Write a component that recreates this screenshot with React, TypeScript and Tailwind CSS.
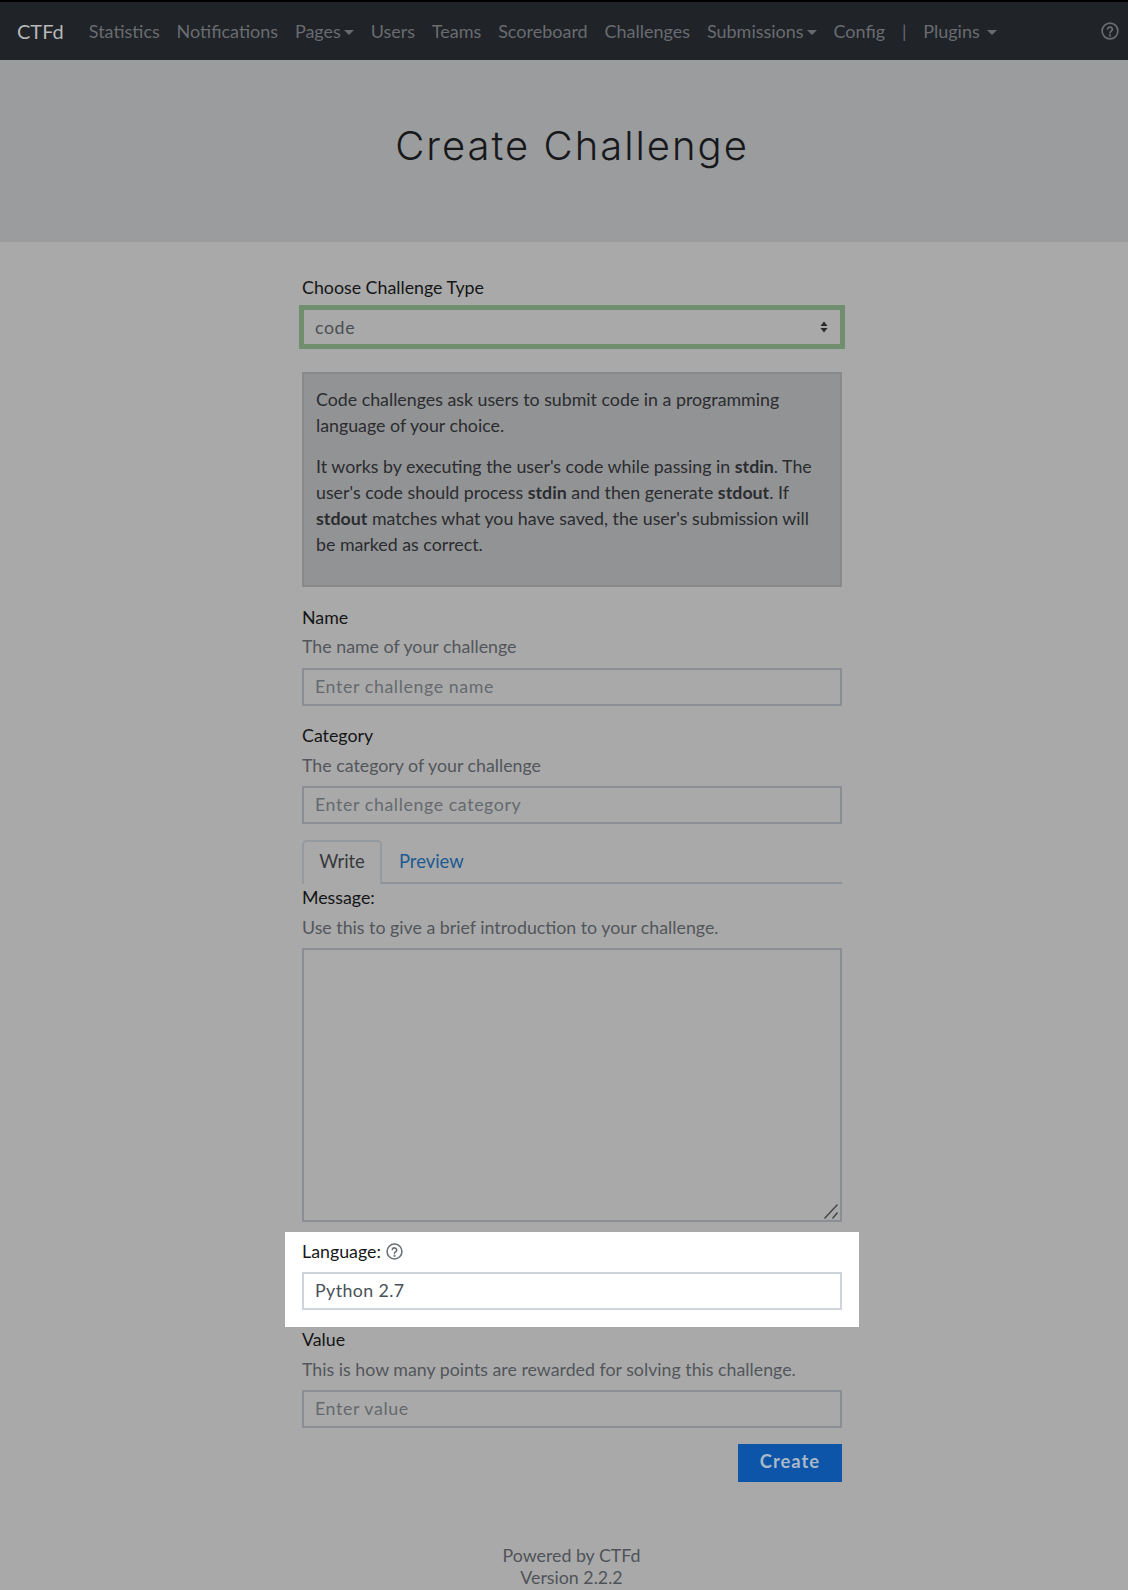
import React from "react";

const lato = { fontFamily: "Lato, 'Liberation Sans', sans-serif" };

function Caret() {
  return <span className="ml-[3px] inline-block w-0 h-0 border-x-[5px] border-x-transparent border-t-[5px] border-t-[#686b6e] align-[3px]" />;
}

function HelpIcon({ size, color }: { size: number; color: string }) {
  return (
    <svg width={size} height={size} viewBox="0 0 24 24" fill="none" stroke={color} strokeWidth="2.2" strokeLinecap="round" strokeLinejoin="round" className="inline-block">
      <circle cx="12" cy="12" r="10.5" />
      <path d="M8.8 9.3a3.2 3.2 0 0 1 6.3.8c0 2.2-3.1 2.6-3.1 4.4" />
      <circle cx="12" cy="18" r="0.5" fill={color} />
    </svg>
  );
}

function Field({ label, help, placeholder, helpGap, inputGap, bottomGap }: { label: string; help: string; placeholder: string; helpGap: string; inputGap: string; bottomGap: string }) {
  return (
    <div className={bottomGap}>
      <div className="text-[17.8px] leading-[24px] text-[#141516]">{label}</div>
      <div className={helpGap + " text-[17.8px] leading-[24px] text-[#52565b]"}>{help}</div>
      <input
        readOnly
        placeholder={placeholder}
        className={
          inputGap +
          " block w-full h-[38px] border-2 border-[#8b8f95] bg-transparent px-[11px] pb-[3px] text-[17.8px] tracking-[0.6px] text-[#54585d] placeholder:text-[#65696e] outline-none"
        }
      />
    </div>
  );
}

export default function App() {
  return (
    <div style={lato} className="min-h-[1590px] bg-[#a9a9a9] overflow-hidden">
      <nav className="h-[60px] bg-[#202328] border-t-2 border-black flex items-center pl-[17px] pr-[9px] text-[18px] text-[#696c70]">
        <span className="text-[#b6b7b8] text-[20px] mr-[25px]">CTFd</span>
        <div className="flex items-center gap-[16.8px] flex-1">
          <span>Statistics</span>
          <span>Notifications</span>
          <span>Pages<Caret /></span>
          <span>Users</span>
          <span>Teams</span>
          <span>Scoreboard</span>
          <span>Challenges</span>
          <span>Submissions<Caret /></span>
          <span>Config</span>
          <span>|</span>
          <span>Plugins <Caret /></span>
        </div>
        <HelpIcon size={18} color="#696c70" />
      </nav>

      <header className="h-[182px] bg-[#9b9c9e] flex items-center justify-center pl-[16px] pb-[10px]">
        <h1 className="text-[40px] font-light tracking-[2px] text-[#17181a]" style={{ fontFamily: "Inter, sans-serif" }}>Create Challenge</h1>
      </header>

      <div className="pl-[16px]">
        <main className="w-[540px] mx-auto pt-[33px]">
          <div className="text-[17.8px] leading-[24px] text-[#141516]">Choose Challenge Type</div>
          <div className="relative mt-[9px] h-[38px]">
            <div className="h-full border-2 border-[#6f8f6f] ring-[3px] ring-[#6f8f6f] flex items-center justify-between pl-[11px] pr-[12px]">
              <span className="text-[17.8px] tracking-[0.6px] text-[#4b4f54]">code</span>
              <svg width="8" height="12" viewBox="0 0 8 12" fill="#2a2c2f"><path d="M4 0.5 7.5 5H0.5zM4 11.5 0.5 7h7z" /></svg>
            </div>
          </div>

          <div className="mt-[26px] h-[215px] border-2 border-[#87898b] bg-[#929395] px-[12px] pt-[12px] text-[17.8px] leading-[26px] text-[#2a2c2f]">
            <p>Code challenges ask users to submit code in a programming language of your choice.</p>
            <p className="mt-[15px]">
              It works by executing the user's code while passing in <b>stdin</b>. The user's code should process <b>stdin</b> and then generate <b>stdout</b>. If <b>stdout</b> matches what you have saved, the user's submission will be marked as correct.
            </p>
          </div>

          <div className="mt-[18px]">
            <Field label="Name" help="The name of your challenge" placeholder="Enter challenge name" helpGap="mt-[5px]" inputGap="mt-[10px]" bottomGap="mb-[17px]" />
            <Field label="Category" help="The category of your challenge" placeholder="Enter challenge category" helpGap="mt-[6px]" inputGap="mt-[9px]" bottomGap="mb-[16px]" />
          </div>

          <div className="flex h-[44px] border-b-2 border-[#8f9499] text-[18.4px]">
            <div className="h-[44px] w-[80px] border-2 border-b-0 border-[#959a9f] rounded-t-[5px] bg-[#a9a9a9] flex items-center justify-center text-[#35383c] pb-[2px]">Write</div>
            <div className="ml-[17px] pt-[1px] flex items-center h-[42px] text-[#1d5a91]">Preview</div>
          </div>

          <div className="mt-[1px] text-[17.8px] leading-[24px] text-[#141516]">Message:</div>
          <div className="mt-[6px] text-[17.8px] leading-[24px] text-[#52565b]">Use this to give a brief introduction to your challenge.</div>
          <div className="relative mt-[9px] h-[274px]">
            <textarea readOnly className="block w-full h-full resize-none border-2 border-[#8b8f95] bg-transparent outline-none" />
            <svg width="14" height="15" viewBox="0 0 14 15" fill="none" stroke="#3f4144" strokeWidth="1.3" className="absolute right-[4px] bottom-[3px]">
              <path d="M0.5 14.5 13.5 0.5M8.5 14.5 13.5 8.5" />
            </svg>
          </div>

          <div className="mt-[10px] mx-[-17px] h-[95px] bg-white px-[17px] pt-[7px]">
            <div className="flex items-center gap-[5px] text-[17.8px] leading-[24px] text-[#17181a]">
              Language:
              <HelpIcon size={17} color="#6b7075" />
            </div>
            <input readOnly value="Python 2.7" className="mt-[9px] block w-full h-[38px] border-2 border-[#ced4da] bg-white px-[11px] pb-[3px] text-[17.8px] tracking-[0.4px] text-[#495057] outline-none" />
          </div>

          <Field label="Value" help="This is how many points are rewarded for solving this challenge." placeholder="Enter value" helpGap="mt-[6px]" inputGap="mt-[9px]" bottomGap="mb-[16px]" />

          <div className="flex justify-end">
            <button className="w-[104px] h-[38px] pb-[3px] bg-[#0d55a8] text-[#a9b8c9] text-[18.4px] font-bold tracking-[1px]">Create</button>
          </div>
        </main>

        <footer className="mt-[62px] pr-[1px] text-center text-[17.8px] leading-[22px] text-[#4f5358]">
          <div>Powered by CTFd</div>
          <div>Version 2.2.2</div>
        </footer>
      </div>
    </div>
  );
}
